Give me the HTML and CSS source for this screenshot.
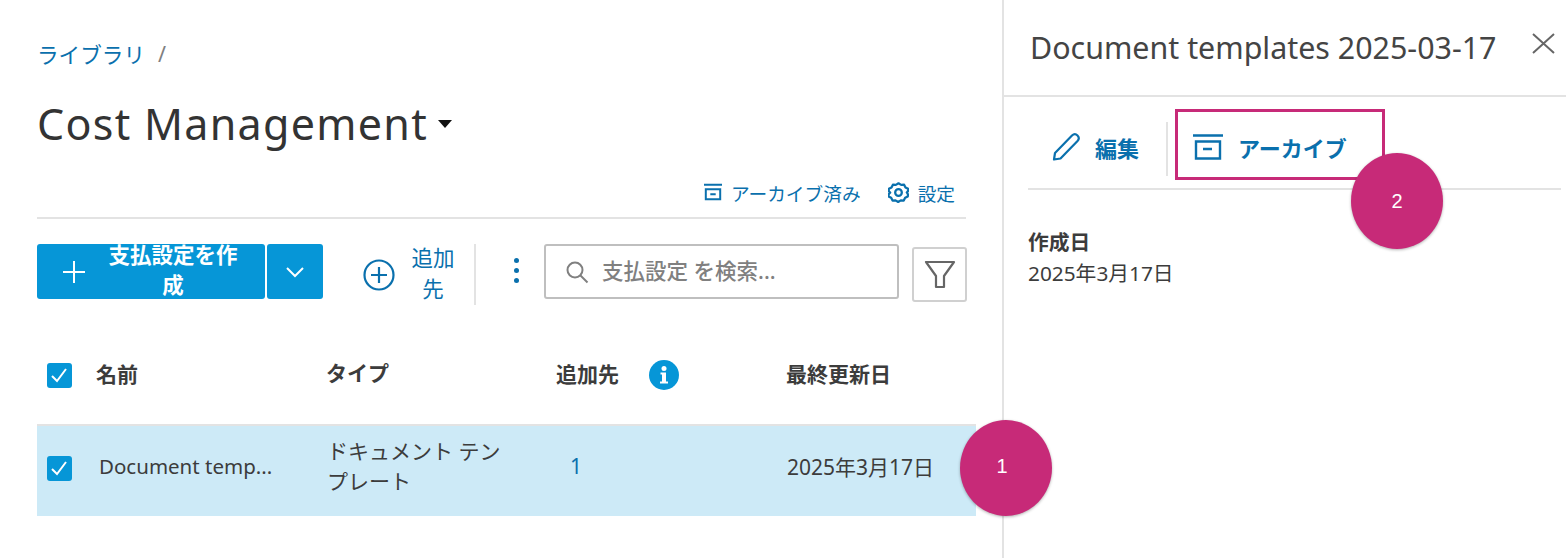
FILE: index.html
```html
<!DOCTYPE html>
<html lang="ja">
<head>
  <meta charset="UTF-8">
  <title>Cost Management</title>
  <link rel="stylesheet" href="styles.css">
</head>
<body>
  <div class="page">
    <main class="main">
      <div class="breadcrumb"><a class="link">ライブラリ</a><span class="slash">/</span></div>
      <h1 class="title">Cost Management <span class="caret"></span></h1>

      <div class="sublinks">
        <a class="sublink">
          <svg width="18" height="18" viewBox="0 0 20 20" fill="none" stroke="#0a70ad" stroke-width="2.200"><path d="M0 2h20M2 7h16v11H2zM7 12.500h6"/></svg>
          アーカイブ済み
        </a>
        <a class="sublink">
          <svg width="21" height="21" viewBox="0 0 24 24" fill="none" stroke="#0a70ad" stroke-width="2.600" stroke-linejoin="round"><path d="M12 1.500l3 1.800 3.400-.2 1.600 3.100 3 1.600-.2 2.700L21.500 12l1.300 2-.2 2.500-3 1.600-1.600 3.100-3.400-.2-3 1.800-3-1.800-3.400.2-1.600-3.100-3-1.600.2-2.500L2.500 12l-1.700-1.500.2-2.700 3-1.600 1.600-3.100 3.400.2z"/><circle cx="12" cy="12" r="3.800"/></svg>
          設定
        </a>
      </div>

      <div class="toolbar">
        <div class="split">
          <button class="btn-create">
            <svg width="24" height="24" viewBox="0 0 24 24" stroke="#fff" stroke-width="2"><path d="M12 1v22M1 12h22"/></svg>
            <span class="btn-label">支払設定を作成</span>
          </button>
          <button class="btn-arrow">
            <svg width="20" height="12" viewBox="0 0 20 12" fill="none" stroke="#fff" stroke-width="2"><path d="M2 2l8 8 8-8"/></svg>
          </button>
        </div>
        <a class="add-to">
          <svg width="32" height="32" viewBox="0 0 32 32" fill="none" stroke="#0a70ad" stroke-width="2.200"><circle cx="16" cy="16" r="14.500"/><path d="M16 8v16M8 16h16"/></svg>
          <span class="add-label">追加先</span>
        </a>
        <div class="more"><i></i><i></i><i></i></div>
        <div class="search">
          <svg width="24" height="24" viewBox="0 0 24 24" fill="none" stroke="#808080" stroke-width="2"><circle cx="10" cy="10" r="7.500"/><path d="M15.500 15.500l7 7"/></svg>
          <span class="search-text">支払設定 を検索...</span>
        </div>
        <button class="filter">
          <svg width="32" height="32" viewBox="0 0 32 32" fill="none" stroke="#666" stroke-width="2.200" stroke-linejoin="round"><path d="M2 3h28L20 17v11h-8V17z"/></svg>
        </button>
      </div>

      <div class="row row-head">
        <span class="check"><svg width="24" height="24" viewBox="0 0 24 24" fill="none" stroke="#fff" stroke-width="2"><path d="M5 13l5 5 9-12"/></svg></span>
        <span class="cell-name cell-head">名前</span>
        <span class="cell-type cell-head">タイプ</span>
        <span class="cell-added cell-head">追加先
          <svg class="info" width="30" height="30" viewBox="0 0 30 30"><circle cx="15" cy="15" r="15" fill="#0696d7"/><circle cx="15" cy="8.500" r="2.500" fill="#fff"/><path d="M11.500 12.500h5.500v9h2v2h-8v-2h2v-7h-1.500z" fill="#fff"/></svg>
        </span>
        <span class="cell-date cell-head">最終更新日</span>
      </div>

      <div class="row row-selected">
        <span class="check"><svg width="24" height="24" viewBox="0 0 24 24" fill="none" stroke="#fff" stroke-width="2"><path d="M5 13l5 5 9-12"/></svg></span>
        <span class="cell-name doc-name">Document temp...</span>
        <span class="cell-type">ドキュメント テンプレート</span>
        <span class="cell-added count">1</span>
        <span class="cell-date">2025年3月17日</span>
      </div>
    </main>

    <aside class="panel">
      <div class="panel-head">
        <h2 class="panel-title">Document templates 2025-03-17</h2>
        <svg class="close" width="23" height="21" viewBox="0 0 23 21" stroke="#666" stroke-width="2"><path d="M1 1l21 19M22 1L1 20"/></svg>
      </div>
      <div class="actions">
        <a class="action edit">
          <svg width="30" height="30" viewBox="0 0 30 30" fill="none" stroke="#0a70ad" stroke-width="2.200" stroke-linejoin="round"><path d="M2 27.500l1-6.500L20 3.500c2-1.800 4-1.500 5.500 0s1.800 3.500 0 5.500L8.500 26.500z"/></svg>
          編集
        </a>
        <a class="action archive">
          <svg width="30" height="26" viewBox="0 0 30 26" fill="none" stroke="#0a70ad" stroke-width="2.400"><path d="M0 1.500h30M3 7.500h24v17H3zM10 15h9"/></svg>
          アーカイブ
        </a>
      </div>
      <div class="detail">
        <div class="detail-label">作成日</div>
        <div class="detail-value">2025年3月17日</div>
      </div>
    </aside>
  </div>

  <div class="marker marker-one">1</div>
  <div class="marker marker-two">2</div>
</body>
</html>
```

FILE: styles.css
```css
* {
  box-sizing: border-box;
}
body {
  margin: 0;
  background: #fff;
  color: #3c3c3c;
  font-family: "Noto Sans", "Noto Sans CJK JP", sans-serif;
  overflow: hidden;
}
.page {
  display: flex;
  height: 558px;
}
.main {
  width: 1004px;
  padding: 37px 0 0 37px;
  border-right: 2px solid #e3e3e3;
}
.breadcrumb {
  display: flex;
  align-items: center;
  gap: 13px;
  height: 32px;
  font-size: 21.600px;
  color: #808080;
}
.link {
  color: #0a70ad;
}
.title {
  margin: 19px 0 0;
  height: 72px;
  font-size: 43px;
  font-weight: 400;
  line-height: 72px;
  letter-spacing: 1.300px;
  color: #333;
}
.caret {
  display: inline-block;
  margin-left: -3px;
  vertical-align: 12px;
  border: 7px solid transparent;
  border-top: 8px solid #111;
  border-bottom: 0;
}
.sublinks {
  display: flex;
  justify-content: flex-end;
  align-items: center;
  gap: 27px;
  width: 929px;
  height: 49px;
  margin-top: 10px;
  padding: 0 11px 3px 0;
  border-bottom: 2px solid #e3e3e3;
}
.sublink {
  display: flex;
  align-items: center;
  gap: 9px;
  font-size: 18.700px;
  color: #0a70ad;
}
.toolbar {
  display: flex;
  align-items: flex-start;
  width: 930px;
  height: 60px;
  margin-top: 25px;
}
.split {
  display: flex;
  gap: 2px;
  height: 55px;
}
.split button {
  border: none;
  background: #0696d7;
  border-radius: 3px;
  color: #fff;
}
.btn-create {
  display: flex;
  align-items: center;
  width: 228px;
  padding: 0 0 0 25px;
  font-family: inherit;
  font-size: 21.500px;
  font-weight: 700;
  line-height: 30px;
}
.btn-label {
  width: 132px;
  margin: -4px 0 0 21px;
  text-align: center;
}
.btn-arrow {
  display: flex;
  align-items: center;
  justify-content: center;
  width: 56px;
}
.add-to {
  display: flex;
  align-items: center;
  width: 113px;
  height: 61px;
  margin-left: 40px;
  border-right: 2px solid #e3e3e3;
  color: #0a70ad;
}
.add-label {
  width: 44px;
  margin: -3px 0 0 16px;
  font-size: 21.500px;
  line-height: 31px;
  text-align: center;
}
.more {
  display: flex;
  flex-direction: column;
  gap: 5px;
  margin: 14px 0 0 38px;
}
.more i {
  width: 5px;
  height: 5px;
  border-radius: 50%;
  background: #0a70ad;
}
.search {
  display: flex;
  align-items: center;
  gap: 13px;
  width: 355px;
  height: 55px;
  margin-left: 25px;
  padding-left: 19px;
  border: 2px solid #bfbfbf;
  border-radius: 3px;
  font-size: 21.500px;
  font-weight: 500;
  color: #808080;
}
.search-text {
  margin-top: -4px;
}
.filter {
  display: flex;
  align-items: center;
  justify-content: center;
  width: 55px;
  height: 55px;
  margin: 3px 0 0 13px;
  padding: 0;
  background: #fff;
  border: 2px solid #d0d0d0;
  border-radius: 3px;
}
.row {
  display: flex;
  align-items: center;
  font-size: 21px;
}
.row-head {
  width: 929px;
  height: 92px;
  margin-top: 28px;
  padding-bottom: 6px;
}
.row-selected {
  width: 939px;
  height: 92px;
  padding-bottom: 6px;
  background: #cdeaf7;
  border-top: 2px solid #e3e3e3;
}
.row-selected span:not(.check) {
  margin-bottom: 4px;
}
.check {
  display: flex;
  flex: none;
  width: 25px;
  height: 25px;
  margin-left: 10px;
  background: #0696d7;
  border-radius: 3px;
}
.cell-head {
  margin-bottom: 4px;
  font-weight: 700;
}
.info {
  margin-top: 4px;
}
.cell-name {
  width: 230px;
  margin-left: 24px;
}
.doc-name {
  width: 228px;
  margin-left: 27px;
  font-size: 20.500px;
}
.cell-type {
  width: 230px;
  line-height: 30px;
}
.row-selected .cell-type {
  width: 185px;
  margin-right: 45px;
}
.cell-added {
  display: flex;
  align-items: center;
  gap: 30px;
  width: 230px;
}
.count {
  padding-left: 13px;
  color: #0a70ad;
}
.panel {
  flex: 1;
  min-width: 0;
}
.panel-head {
  display: flex;
  justify-content: space-between;
  height: 97px;
  padding: 26px 11px 0 26px;
  border-bottom: 2px solid #e3e3e3;
}
.panel-title {
  margin: 0;
  font-size: 30.400px;
  font-weight: 400;
  line-height: 44px;
  color: #444;
}
.close {
  margin-top: 7px;
}
.actions {
  display: flex;
  align-items: flex-start;
  height: 93px;
  margin: 0 5px 0 24px;
  padding-top: 12px;
  border-bottom: 2px solid #e3e3e3;
  font-size: 22px;
  font-weight: 700;
  color: #0a70ad;
}
.action {
  display: flex;
  align-items: center;
}
.edit {
  gap: 13px;
  width: 140px;
  height: 54px;
  margin-top: 13px;
  padding: 0 0 4px 24px;
  border-right: 2px solid #e3e3e3;
}
.archive {
  gap: 15px;
  width: 210px;
  height: 71px;
  margin-left: 7px;
  padding: 5px 0 0 15px;
  border: 3px solid #c72a78;
}
.detail {
  padding: 37px 0 0 24px;
  font-size: 20.800px;
  line-height: 31px;
}
.detail-label {
  font-weight: 700;
}
.marker {
  position: absolute;
  display: flex;
  align-items: center;
  justify-content: center;
  width: 92px;
  height: 96px;
  border-radius: 50%;
  background: #c72a78;
  box-shadow: 0 1px 3px rgba(0, 0, 0, 0.3);
  color: #fff;
  font-family: "Liberation Sans", sans-serif;
  font-size: 20px;
}
.marker-one {
  left: 960px;
  top: 420px;
  padding: 0 8px 4px 0;
}
.marker-two {
  left: 1351px;
  top: 153px;
}
```
